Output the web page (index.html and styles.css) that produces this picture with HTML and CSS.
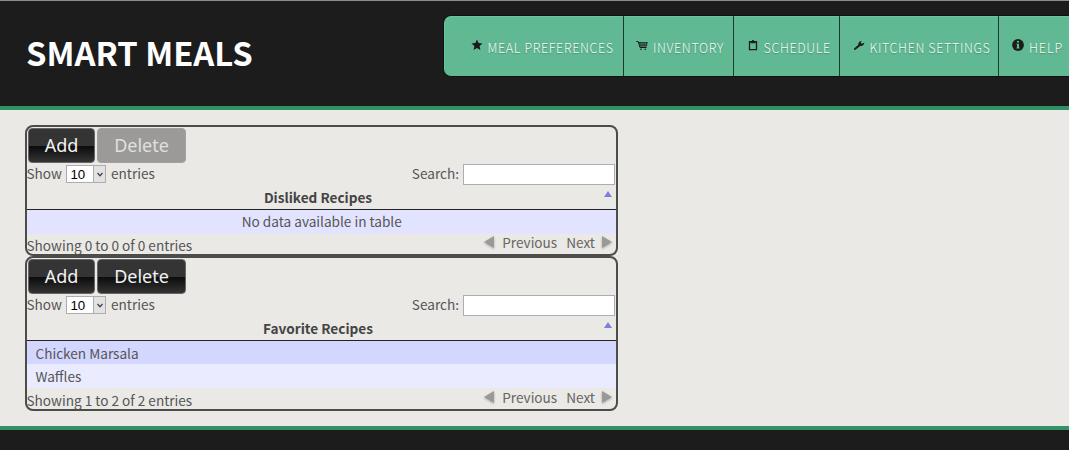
FILE: index.html
```html
<!DOCTYPE html>
<html lang="en">
<head>
<meta charset="utf-8">
<title>Smart Meals</title>
<link rel="stylesheet" href="styles.css">
</head>
<body>
<header class="header">
  <h1 class="brand">SMART MEALS</h1>
  <nav class="nav">
    <a class="nav-item preferences"><svg class="icon" viewBox="0 0 12 12"><path d="M6 .5l1.600 3.600 3.900.4-2.900 2.600.8 3.900L6 9l-3.400 2 .8-3.900L.5 4.500l3.900-.4z"/></svg><span class="label">MEAL PREFERENCES</span></a>
    <a class="nav-item inventory"><svg class="icon" viewBox="0 0 12 12"><path d="M.3 2.500h1.900l1.800 6h6.500" fill="none" stroke="#1c1c1c"/><path d="M2.700 3h9L10.800 7.500H4z"/><path d="M3 4.300h8.500M3.500 5.900h7.500M5.200 3v4.500M7.200 3v4.500M9.300 3v4.500" fill="none" stroke="#60b992" stroke-width=".4"/><circle cx="5" cy="10.200" r=".8"/><circle cx="9.300" cy="10.200" r=".8"/></svg><span class="label">INVENTORY</span></a>
    <a class="nav-item schedule"><svg class="icon" viewBox="0 0 12 12"><path d="M2.500 2.700h7v8h-7z" fill="none" stroke="#1c1c1c" stroke-width="1.300"/><path d="M3.500 2.100h1.300a1.200 1.200 0 0 1 2.400 0h1.300v2.200h-5z"/></svg><span class="label">SCHEDULE</span></a>
    <a class="nav-item settings"><svg class="icon" viewBox="0 0 12 12"><path d="M1 9.500l4.200-3.600C5 3.900 6.500 2 8.800 2.100L7.700 3.600l1 1.100 2.500-.9c.2 2.200-1.800 3.600-4 3.200L2.500 10.800C1.500 11.200.6 10.400 1 9.500z"/></svg><span class="label">KITCHEN SETTINGS</span></a>
    <a class="nav-item help"><svg class="icon" viewBox="0 0 12 12"><circle cx="6" cy="6" r="5.900"/><path d="M5 2h2v1.600H5zM4.500 4.700H7v3.700h.6v1H4.400v-1H5V5.600h-.5z" fill="#60b992"/></svg><span class="label">HELP</span></a>
  </nav>
</header>
<main class="main">
  <section class="panel disliked">
    <div class="buttons"><button class="btn">Add</button><button class="btn btn-delete" disabled>Delete</button></div>
    <div class="controls">
      <div class="length">Show <span class="select"><span class="value">10</span><span class="drop"><svg viewBox="0 0 6 5"><path d="M.5 1L3 3.700 5.500 1" fill="none" stroke="#444" stroke-width="1.300"/></svg></span></span> entries</div>
      <label class="search">Search: <input class="search-box" type="text"></label>
    </div>
    <div class="table-head">Disliked Recipes<span class="sort"></span></div>
    <div class="row empty">No data available in table</div>
    <div class="footer"><span class="info">Showing 0 to 0 of 0 entries</span>
      <div class="pager"><i class="arrow prev"></i><span>Previous</span><span>Next</span><i class="arrow next"></i></div></div>
  </section>
  <section class="panel favorite">
    <div class="buttons"><button class="btn">Add</button><button class="btn btn-delete">Delete</button></div>
    <div class="controls">
      <div class="length">Show <span class="select"><span class="value">10</span><span class="drop"><svg viewBox="0 0 6 5"><path d="M.5 1L3 3.700 5.500 1" fill="none" stroke="#444" stroke-width="1.300"/></svg></span></span> entries</div>
      <label class="search">Search: <input class="search-box" type="text"></label>
    </div>
    <div class="table-head">Favorite Recipes<span class="sort"></span></div>
    <div class="row odd">Chicken Marsala</div>
    <div class="row even">Waffles</div>
    <div class="footer"><span class="info">Showing 1 to 2 of 2 entries</span>
      <div class="pager"><i class="arrow prev"></i><span>Previous</span><span>Next</span><i class="arrow next"></i></div></div>
  </section>
</main>
<div class="bottom"></div>
</body>
</html>
```
FILE: styles.css
```css
* { box-sizing: border-box; }
body {
  margin: 0;
  height: 450px;
  overflow: hidden;
  display: flex;
  flex-direction: column;
  background: #1c1c1c;
  color: #555;
  font: 13.600px/20px "Noto Sans CJK SC", "Open Sans", sans-serif;
}
.header {
  height: 110px;
  flex: none;
  display: flex;
  justify-content: space-between;
  align-items: flex-start;
  border-top: 1px solid #8b8b8b;
  border-bottom: 4px solid #2f9164;
  overflow: hidden;
}
.brand {
  margin: 31px 0 0 26px;
  color: #fff;
  font-size: 32.800px;
  line-height: 40px;
  font-weight: 700;
  white-space: nowrap;
}
.nav {
  display: flex;
  width: 626px;
  height: 62px;
  margin-top: 14px;
  background: #60b992;
  border: 1px solid #111;
  border-right: 0;
  border-radius: 8px 0 0 8px;
  box-shadow: inset 1px 1px #67c69c;
  overflow: hidden;
}
.nav-item {
  display: flex;
  flex: none;
  align-items: flex-start;
  padding-top: 22px;
  color: #f4fcf8;
  font-size: 12.600px;
  font-weight: 300;
  letter-spacing: 0.6px;
  white-space: nowrap;
  text-shadow: 0 1px 1px #4c8b70;
  border-right: 1px solid #1e3a2e;
}
.preferences { width: 180px; padding-left: 26.500px; }
.inventory { width: 110px; padding-left: 12px; }
.schedule { width: 106px; padding-left: 12.500px; }
.settings { width: 159px; padding-left: 12.500px; }
.help { width: 110px; padding-left: 13px; border-right: 0; letter-spacing: 0.9px; }
.icon { width: 12px; height: 12px; flex: none; margin: 1px 5px 0 0; fill: #1c1c1c; }
.label { line-height: 20px; }
.main {
  height: 316px;
  flex: none;
  padding: 15px 0 0 25px;
  background: #eae9e5;
}
.panel {
  width: 593px;
  border: 2px solid #4c4c4b;
  border-radius: 8px;
  overflow: hidden;
}
.disliked { height: 131px; }
.favorite { height: 155px; }
.buttons { display: flex; gap: 2px; height: 37px; padding: 1px 0 0 1px; }
.btn {
  width: 67px;
  height: 35px;
  padding: 0 0 1px;
  border: 1px solid #666;
  border-radius: 4px;
  background: linear-gradient(#343434 0 50%, #0b0b0b 51%, #343434);
  color: #f2f2f2;
  font: 18px "Noto Sans", sans-serif;
}
.btn-delete { width: 89px; }
.btn:disabled { background: #9b9a98; border-color: #a3a2a0; color: #e1e0dd; }
.controls { display: flex; justify-content: space-between; height: 23px; padding-right: 1px; }
.length, .search { display: flex; line-height: 18px; }
.length { gap: 4.500px; margin-left: -0.5px; }
.search { gap: 4px; }
.select {
  display: flex;
  width: 40px;
  height: 18px;
  margin-top: 1px;
  border: 1px solid #abadb3;
  background: #fff;
  color: #000;
  font: 13.300px/17px "Liberation Sans", sans-serif;
}
.value { flex: 1; padding-left: 3px; }
.drop {
  display: flex;
  align-items: center;
  justify-content: center;
  width: 12px;
  background: #e2e2e2;
  border-left: 1px solid #abadb3;
}
.drop svg { width: 6px; height: 5px; }
.search-box {
  width: 152px;
  height: 21px;
  margin: 0;
  border: 1px solid #abadb3;
  background: #fff;
}
.table-head {
  position: relative;
  height: 23px;
  padding-right: 7px;
  border-bottom: 1px solid #222;
  color: #444;
  font-weight: 700;
  text-align: center;
}
.sort {
  position: absolute;
  right: 4px;
  top: 4px;
  border: 4px solid transparent;
  border-top: 0;
  border-bottom: 6px solid #7c7ee0;
}
.row { height: 24px; padding: 2px 8px 0 8.500px; }
.empty { background: #e2e4ff; text-align: center; padding-top: 1px; }
.odd { height: 23px; background: #d3d6ff; }
.even { background: #eaebff; }
.footer { display: flex; justify-content: space-between; }
.info { padding-top: 2px; margin-left: -0.5px; }
.disliked .footer { margin-top: -1px; }
.pager { display: flex; gap: 9px; padding-right: 4px; color: #666; line-height: 19px; }
.arrow {
  width: 0;
  height: 0;
  margin-top: 3px;
  border: 6px solid transparent;
  filter: drop-shadow(0 1px 1px #aaa);
}
.prev { border-left: 0; border-right: 10px solid #999; margin-right: -1px; }
.next { border-right: 0; border-left: 10px solid #999; margin-left: -2px; }
.bottom { flex: 1; border-top: 4px solid #2f9164; }
```
